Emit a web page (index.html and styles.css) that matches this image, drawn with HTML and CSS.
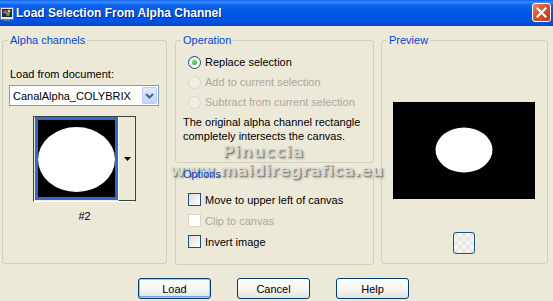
FILE: index.html
```html
<!DOCTYPE html>
<html lang="en">
<head>
  <meta charset="UTF-8" />
  <title>Load Selection From Alpha Channel</title>
  <link rel="stylesheet" href="styles.css">
</head>
<body>

<div class="window">

  <!-- Title bar -->
  <div class="titlebar">
    <svg class="app-icon" width="14" height="14" viewBox="0 0 14 14">
      <rect x="0.5" y="0.5" width="13" height="12" fill="#dfe6f2" stroke="#6a7a94"/>
      <rect x="2" y="2" width="10" height="8" fill="#1d2a3a"/>
      <circle cx="5" cy="5" r="2" fill="#d23a8a"/>
      <circle cx="8" cy="7" r="2" fill="#3cb34a"/>
      <circle cx="9" cy="4" r="1.5" fill="#f2c230"/>
      <rect x="4" y="12" width="6" height="2" fill="#6a7a94"/>
    </svg>
    <span class="title">Load Selection From Alpha Channel</span>
    <div class="close-btn">
      <svg width="11" height="11" viewBox="0 0 11 11">
        <path d="M1.5 1.5 L9.5 9.5 M9.5 1.5 L1.5 9.5" stroke="#fff" stroke-width="2.2" stroke-linecap="square"/>
      </svg>
    </div>
  </div>

  <div class="client">
    <div class="panels">

      <!-- Alpha channels -->
      <fieldset class="group alpha">
        <legend>Alpha channels</legend>
        <div class="field-label">Load from document:</div>
        <div class="combo">
          <span class="combo-text">CanalAlpha_COLYBRIX</span>
          <span class="combo-btn">
            <svg width="9" height="6" viewBox="0 0 9 6">
              <path d="M1 1 L4.5 4.5 L8 1" fill="none" stroke="#4d6185" stroke-width="2"/>
            </svg>
          </span>
        </div>
        <div class="thumb-wrap">
          <div class="thumb">
            <div class="thumb-image">
              <svg width="77" height="77" viewBox="0 0 77 77">
                <rect width="77" height="77" fill="#000"/>
                <ellipse cx="38.5" cy="39.5" rx="38.5" ry="32.5" fill="#fff"/>
              </svg>
            </div>
            <div class="thumb-drop">
              <svg width="7" height="4" viewBox="0 0 7 4">
                <path d="M0 0 H7 L3.5 4 Z" fill="#000"/>
              </svg>
            </div>
          </div>
          <div class="thumb-caption">#2</div>
        </div>
      </fieldset>

      <div class="middle">
        <!-- Operation -->
        <fieldset class="group operation">
          <legend>Operation</legend>
          <div class="choice">
            <span class="radio checked"></span>
            <span>Replace selection</span>
          </div>
          <div class="choice disabled">
            <span class="radio"></span>
            <span>Add to current selection</span>
          </div>
          <div class="choice disabled">
            <span class="radio"></span>
            <span>Subtract from current selection</span>
          </div>
          <p class="note">The original alpha channel rectangle<br>completely intersects the canvas.</p>
        </fieldset>

        <!-- Options -->
        <fieldset class="group options">
          <legend class="on-top">Options</legend>
          <div class="choice tall">
            <span class="check"></span>
            <span>Move to upper left of canvas</span>
          </div>
          <div class="choice tall disabled">
            <span class="check"></span>
            <span>Clip to canvas</span>
          </div>
          <div class="choice tall">
            <span class="check"></span>
            <span>Invert image</span>
          </div>
        </fieldset>
      </div>

      <!-- Preview -->
      <fieldset class="group preview">
        <legend>Preview</legend>
        <svg class="preview-image" width="142" height="97" viewBox="0 0 142 97">
          <rect width="142" height="97" fill="#000"/>
          <ellipse cx="71" cy="48" rx="28.5" ry="22.5" fill="#fff"/>
        </svg>
        <div class="bg-btn"></div>
      </fieldset>
    </div>

    <div class="actions">
      <button class="xp-btn default">Load</button>
      <button class="xp-btn">Cancel</button>
      <button class="xp-btn">Help</button>
    </div>
  </div>

  <!-- watermark stamped over the screenshot -->
  <div class="watermark">
    <div class="wm-name">Pinuccia</div>
    <div class="wm-site">www.maidiregrafica.eu</div>
  </div>
</div>

</body>
</html>
```

FILE: styles.css
```css
/* General */
body {
  margin: 0;
  font-family: "Liberation Sans", Arial, sans-serif;
  font-size: 11px;
  color: #000;
  background-color: #ECE9D8;
}

.window {
  position: relative;
  width: 553px;
  height: 301px;
  overflow: hidden;
}

/* Title bar */
.titlebar {
  display: flex;
  align-items: center;
  height: 26px;
  background: linear-gradient(#0a5fef 0, #3d8cf9 2px, #0b63ee 5px, #0058e6 12px, #0055e3 20px, #0047d4 26px);
}

.app-icon {
  margin: 1px 2px 0 0;
}

.title {
  font-family: "Liberation Sans", Arial, sans-serif;
  font-weight: bold;
  font-size: 12px;
  color: #fff;
  text-shadow: 1px 1px 0 #0a1e7a;
}

.close-btn {
  display: flex;
  align-items: center;
  justify-content: center;
  width: 17px;
  height: 17px;
  margin: 0 2px 1px auto;
  border: 1px solid #fff;
  border-radius: 3px;
  background: linear-gradient(135deg, #e8866a 0, #d9542c 45%, #c03a14 100%);
}

/* Client area */
.client {
  padding: 8px 0 0 2px;
}

.panels {
  display: flex;
}

.group {
  box-sizing: border-box;
  margin: 0;
  padding: 0;
  border: 1px solid #D0D0BF;
  border-radius: 3px;
}

.group legend {
  margin-left: 5px;
  padding: 0 2px;
  line-height: 13px;
  color: #0046D5;
}

.group legend.on-top {
  position: relative;
  z-index: 2;
}

/* Alpha channels */
.alpha {
  width: 165px;
  height: 230px;
  margin-right: 8px;
  padding: 0 6px;
}

.alpha legend {
  margin-left: -1px;
}

.field-label {
  margin: 21px 0 0 1px;
  line-height: 13px;
}

.combo {
  box-sizing: border-box;
  display: flex;
  align-items: center;
  width: 150px;
  height: 21px;
  margin-top: 4px;
  border: 1px solid #7F9DB9;
  background: #fff;
}

.combo-text {
  flex: 1;
  padding-left: 3px;
}

.combo-btn {
  display: flex;
  align-items: center;
  justify-content: center;
  width: 15px;
  height: 17px;
  margin-right: 1px;
  border: 1px solid #b9cdf6;
  border-radius: 2px;
  box-sizing: border-box;
  background: linear-gradient(#e1eafe, #c1d3fb);
}

.thumb-wrap {
  width: 103px;
  margin: 10px 0 0 24px;
  text-align: center;
}

.thumb {
  display: flex;
  box-sizing: border-box;
  height: 86px;
  border: 1px solid #404040;
  border-bottom-color: #fff;
  border-right-color: #404040;
}

.thumb-image {
  width: 77px;
  height: 77px;
  margin-left: 1px;
  border: 3px solid #316AC5;
}

.thumb-image svg {
  display: block;
}

.thumb-drop {
  flex: 1;
  display: flex;
  align-items: center;
  justify-content: center;
  border-left: 1px solid #fff;
  border-bottom: 1px solid #404040;
  padding-top: 1px;
}

.thumb-caption {
  margin-top: 8px;
  line-height: 13px;
}

/* Operation / Options */
.middle {
  display: flex;
  flex-direction: column;
  gap: 5px;
  width: 199px;
  margin-right: 7px;
}

.operation {
  height: 129px;
  padding-top: 5px;
}

.options {
  height: 97px;
  padding-top: 8px;
}

.choice {
  display: flex;
  align-items: center;
  gap: 4px;
  height: 20px;
  padding-left: 12px;
}

.choice.tall {
  height: 21px;
}

.choice.disabled {
  color: #ACA899;
}

.radio {
  box-sizing: border-box;
  display: flex;
  align-items: center;
  justify-content: center;
  width: 13px;
  height: 13px;
  border: 1px solid #1C5180;
  border-radius: 50%;
  background: radial-gradient(circle at 65% 65%, #fff 20%, #dcdcd7 100%);
}

.radio.checked::after {
  content: "";
  width: 5px;
  height: 5px;
  border-radius: 50%;
  background: radial-gradient(circle at 40% 40%, #7ee07e, #21a121);
}

.choice.disabled .radio {
  border-color: #d8d6c9;
  background: #f1efe4;
}

.check {
  box-sizing: border-box;
  width: 13px;
  height: 13px;
  border: 1px solid #1C5180;
  background: linear-gradient(135deg, #dcdcd7, #fff);
}

.choice.disabled .check {
  border-color: #d8d6c9;
  background: #fff;
}

.note {
  margin: 3px 0 0 7px;
  line-height: 14px;
}

/* Preview */
.preview {
  width: 167px;
  height: 230px;
}

.preview-image {
  display: block;
  margin: 55px 0 0 11px;
}

.bg-btn {
  box-sizing: border-box;
  width: 22px;
  height: 22px;
  margin: 33px 0 0 71px;
  border: 1px solid #1C5180;
  border-radius: 3px;
  background:
    conic-gradient(#f4f4f4 25%, #e6e6e6 0 50%, #f4f4f4 0 75%, #e6e6e6 0) 0 0 / 8px 8px;
}

/* Bottom buttons */
.actions {
  display: flex;
  gap: 26px;
  margin-top: 13px;
  padding-left: 136px;
}

.xp-btn {
  box-sizing: border-box;
  width: 73px;
  height: 21px;
  padding: 0;
  border: 1px solid #003C74;
  border-radius: 3px;
  font-family: "Liberation Sans", Arial, sans-serif;
  font-size: 11px;
  color: #000;
  background: linear-gradient(#fff, #f3f3ef 60%, #e3e1d8);
}

.xp-btn.default {
  box-shadow: inset 0 0 0 1px #a9c3f2, inset 0 -1px 0 1px #7ca0e6;
}

/* Watermark */
.watermark {
  position: absolute;
  z-index: 1;
  left: 170px;
  top: 142px;
  width: 186px;
  text-align: center;
  font-family: "DejaVu Sans", sans-serif;
  font-weight: bold;
  color: rgba(228, 226, 216, 0.85);
  text-shadow: 1px 1px 0 rgba(90, 90, 90, 0.5), 2px 2px 2px rgba(70, 70, 70, 0.4);
  pointer-events: none;
}

.wm-name {
  font-size: 16px;
  line-height: 20px;
  letter-spacing: 0.8px;
}

.wm-site {
  font-size: 16px;
  line-height: 17px;
  letter-spacing: 0.2px;
}
```
